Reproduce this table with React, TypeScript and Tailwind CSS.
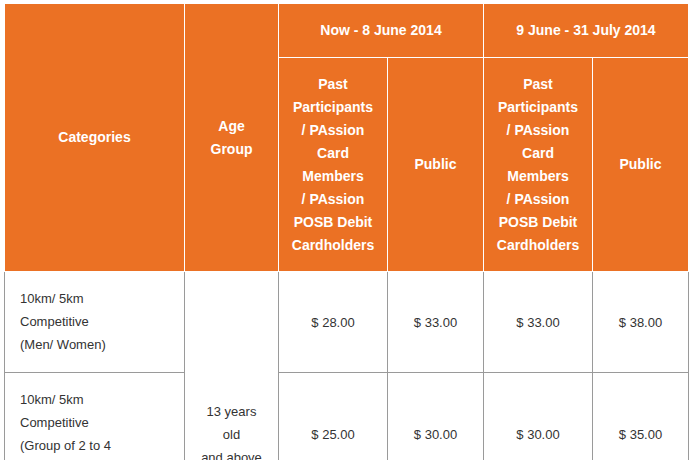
import React from "react";

const H = "flex items-center justify-center text-center border-r border-b border-white bg-[#eb7124] text-white font-bold text-[14px] leading-[23px]";
const B = "border-r border-b border-[#9a9a9a] text-[#333333] text-[13px] leading-[23px]";

function Lines({ lines }: { lines: string[] }) {
  return (
    <div>
      {lines.map((l, i) => (
        <div key={i}>{l}</div>
      ))}
    </div>
  );
}

const member = [
  "Past",
  "Participants",
  "/ PAssion",
  "Card",
  "Members",
  "/ PAssion",
  "POSB Debit",
  "Cardholders",
];

const rows = [
  { cat: ["10km/ 5km", "Competitive", "(Men/ Women)"], p: ["$ 28.00", "$ 33.00", "$ 33.00", "$ 38.00"] },
  { cat: ["10km/ 5km", "Competitive", "(Group of 2 to 4", "pax)"], p: ["$ 25.00", "$ 30.00", "$ 30.00", "$ 35.00"] },
  { cat: ["5km", "Non-Competitive", "(Men/ Women)"], p: ["$ 23.00", "$ 28.00", "$ 28.00", "$ 33.00"] },
];

export default function App() {
  return (
    <div className="bg-white min-h-[460px] pl-[4px] pt-[3px]" style={{ fontFamily: '"Liberation Sans", Arial, Helvetica, sans-serif' }}>
      <div className="grid w-fit grid-cols-[181px_94px_109px_96px_109px_96px]">
        {/* header row 1 */}
        <div className={`${H} row-span-2 border-l border-t`}>Categories</div>
        <div className={`${H} row-span-2 border-t`}>
          <Lines lines={["Age", "Group"]} />
        </div>
        <div className={`${H} col-span-2 h-[55px] border-t`}>Now - 8 June 2014</div>
        <div className={`${H} col-span-2 h-[55px] border-t`}>9 June - 31 July 2014</div>
        {/* header row 2 */}
        <div className={`${H} h-[214px]`}>
          <Lines lines={member} />
        </div>
        <div className={`${H} h-[214px]`}>Public</div>
        <div className={`${H} h-[214px]`}>
          <Lines lines={member} />
        </div>
        <div className={`${H} h-[214px]`}>Public</div>

        {/* body */}
        {rows.map((r, ri) => (
          <React.Fragment key={ri}>
            <div className={`${B} border-l pl-[15px] pr-[10px] pt-[15px] pb-[16px]`}>
              <Lines lines={r.cat} />
            </div>
            {ri === 0 && (
              <div className={`${B} row-span-3 flex items-center justify-center text-center`}>
                <Lines lines={["13 years", "old", "and above"]} />
              </div>
            )}
            {r.p.map((p, pi) => (
              <div key={pi} className={`${B} flex items-center justify-center`}>
                {p}
              </div>
            ))}
          </React.Fragment>
        ))}
      </div>
    </div>
  );
}
